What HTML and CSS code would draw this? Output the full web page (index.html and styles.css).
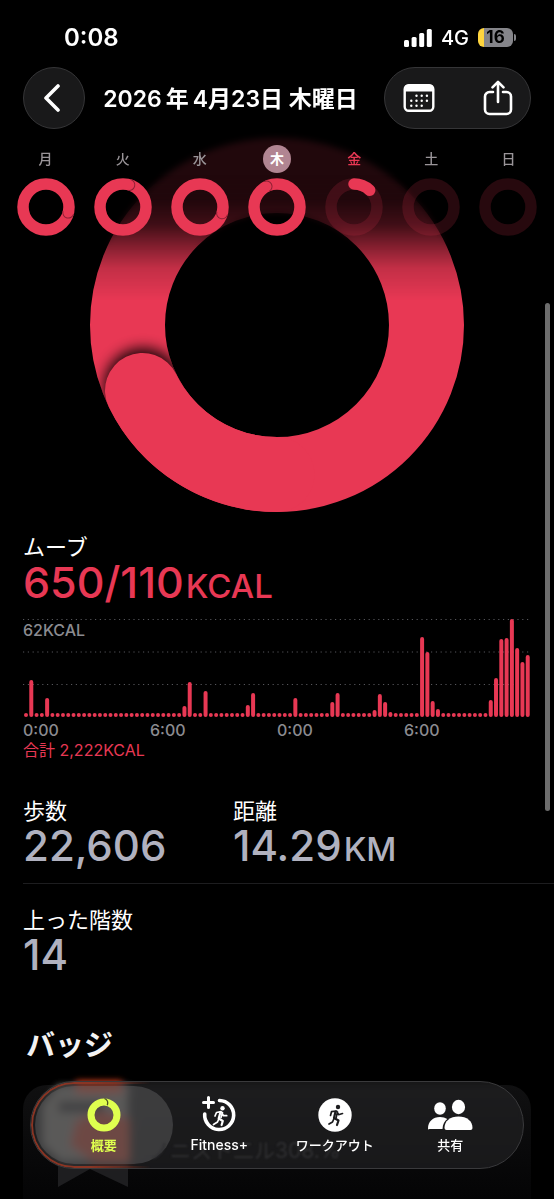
FILE: index.html
```html
<!DOCTYPE html>
<html lang="ja">
<head>
    <meta charset="UTF-8">
    <meta name="viewport" content="width=device-width, initial-scale=1.0">
    <title>アクティビティ</title>
    <link rel="stylesheet" href="styles.css">
</head>
<body>
    <header class="top">
        <div class="status">
            <span class="clock">0:08</span>
            <div class="status-right">
                <svg class="signal" viewBox="0 0 28 18" fill="#fff">
                    <rect x="0" y="11" width="5" height="7" rx="1.5"/>
                    <rect x="7.6" y="8" width="5" height="10" rx="1.5"/>
                    <rect x="15.2" y="4" width="5" height="14" rx="1.5"/>
                    <rect x="22.8" y="0" width="5" height="18" rx="1.5"/>
                </svg>
                <span class="network">4G</span>
                <span class="battery">16</span>
            </div>
        </div>

        <div class="nav">
            <button class="back" aria-label="戻る">
                <svg width="18" height="28" viewBox="0 0 18 28" fill="none" stroke="#fff" stroke-width="3.6" stroke-linecap="round" stroke-linejoin="round"><path d="M15 2 3 14 15 26"/></svg>
            </button>
            <h1>2026<span class="unit">年</span>4月23日 木曜日</h1>
            <div class="actions">
                <button aria-label="カレンダー">
                    <svg width="32" height="30" viewBox="0 0 32 30">
                        <rect x="1.7" y="2.2" width="28.6" height="25.6" rx="4" fill="none" stroke="#fff" stroke-width="2.4"/>
                        <path d="M1.5 8.5V5.5a4 4 0 0 1 4-4h21a4 4 0 0 1 4 4v3z" fill="#fff"/>
                        <g fill="#fff">
                            <circle cx="13.5" cy="12.8" r="1.2"/><circle cx="18.7" cy="12.8" r="1.2"/><circle cx="23.9" cy="12.8" r="1.2"/>
                            <circle cx="8.3" cy="17.8" r="1.2"/><circle cx="13.5" cy="17.8" r="1.2"/><circle cx="18.7" cy="17.8" r="1.2"/><circle cx="23.9" cy="17.8" r="1.2"/>
                            <circle cx="8.3" cy="22.8" r="1.2"/><circle cx="13.5" cy="22.8" r="1.2"/><circle cx="18.7" cy="22.8" r="1.2"/>
                        </g>
                    </svg>
                </button>
                <button aria-label="共有する">
                    <svg width="30" height="36" viewBox="0 0 30 36" fill="none" stroke="#fff" stroke-width="2.6" stroke-linecap="round" stroke-linejoin="round">
                        <path d="M10 12H6.500a4.500 4.500 0 0 0-4.500 4.500v13a4.500 4.500 0 0 0 4.500 4.500h17a4.500 4.500 0 0 0 4.500-4.500v-13a4.500 4.500 0 0 0-4.500-4.500H20"/>
                        <path d="M15 22V2M9.500 7.300 15 1.800l5.500 5.500"/>
                    </svg>
                </button>
            </div>
        </div>

        <div class="week">
            <div class="day">
                <span>月</span>
                <svg viewBox="0 0 58 58"><circle class="full" cx="29" cy="29" r="23"/><path class="tip" d="M29 .5a5.500 5.500 0 0 1 0 11" transform="rotate(104 29 29)"/></svg>
            </div>
            <div class="day">
                <span>火</span>
                <svg viewBox="0 0 58 58"><circle class="full" cx="29" cy="29" r="23"/><path class="tip" d="M29 .5a5.500 5.500 0 0 1 0 11" transform="rotate(16 29 29)"/></svg>
            </div>
            <div class="day">
                <span>水</span>
                <svg viewBox="0 0 58 58"><circle class="full" cx="29" cy="29" r="23"/><path class="tip" d="M29 .5a5.500 5.500 0 0 1 0 11" transform="rotate(106 29 29)"/></svg>
            </div>
            <div class="day selected">
                <span>木</span>
                <svg viewBox="0 0 58 58"><circle class="full" cx="29" cy="29" r="23"/><path class="tip" d="M29 .5a5.500 5.500 0 0 1 0 11" transform="rotate(-27 29 29)"/></svg>
            </div>
            <div class="day today">
                <span>金</span>
                <svg viewBox="0 0 58 58"><circle class="track" cx="29" cy="29" r="23"/><path class="full" stroke-linecap="round" d="M29 6a23 23 0 0 1 15.700 6.200"/></svg>
            </div>
            <div class="day">
                <span>土</span>
                <svg viewBox="0 0 58 58"><circle class="track" cx="29" cy="29" r="23"/></svg>
            </div>
            <div class="day">
                <span>日</span>
                <svg viewBox="0 0 58 58"><circle class="track" cx="29" cy="29" r="23"/></svg>
            </div>
        </div>
    </header>

    <main>
        <svg class="ring" viewBox="0 0 374 374">
            <defs>
                <filter id="soft" x="-50%" y="-50%" width="200%" height="200%"><feGaussianBlur stdDeviation="7"/></filter>
                <clipPath id="band"><path clip-rule="evenodd" d="M187 0a187 187 0 1 1 0 374 187 187 0 0 1 0-374zM187 75a112 112 0 1 0 0 224 112 112 0 0 0 0-224z"/></clipPath>
            </defs>
            <circle cx="187" cy="187" r="149.500" fill="none" stroke="#e83854" stroke-width="75"/>
            <g clip-path="url(#band)"><circle cx="53" cy="249" r="39" fill="#000" opacity=".9" filter="url(#soft)"/></g>
            <path d="M187 336.500A149.500 149.500 0 0 1 52.500 252.500" fill="none" stroke="#e83854" stroke-width="75" stroke-linecap="round"/>
        </svg>

        <section class="move">
            <h2 class="label">ムーブ</h2>
            <p class="value pink">650/110<small>KCAL</small></p>
            <div class="chart">
                <span class="chart-max">62KCAL</span>
                <svg id="bars" viewBox="0 0 508 98">
                    <g class="grid">
                        <path d="M0 .5H508"/>
                        <path d="M0 33H508"/>
                        <path d="M0 65.500H508"/>
                    </g>
                </svg>
            </div>
            <div class="hours"><span>0:00</span><span>6:00</span><span>0:00</span><span>6:00</span></div>
            <p class="total">合計 2,222KCAL</p>
        </section>

        <section class="stats">
            <div class="stat">
                <h2 class="label">歩数</h2>
                <p class="value">22,606</p>
            </div>
            <div class="stat">
                <h2 class="label">距離</h2>
                <p class="value">14.29<small>KM</small></p>
            </div>
        </section>
        <section class="stats">
            <div class="stat">
                <h2 class="label">上った階数</h2>
                <p class="value">14</p>
            </div>
        </section>

        <h2 class="badge-title">バッジ</h2>
        <div class="badge-card">
            <svg width="90" height="108" viewBox="0 0 90 108">
                <defs>
                    <filter id="haze" x="-20%" y="-20%" width="140%" height="140%"><feGaussianBlur stdDeviation="3"/></filter>
                </defs>
                <path d="M8 60v42l32-18 38 18V50z" fill="#1e1e20"/>
                <g filter="url(#haze)">
                    <path d="M-8 20 8 0h72l-2 10v66H10L-8 60z" fill="#8a877f"/>
                    <path d="M26-4h46v12H26z" fill="#ff4a24"/>
                    <path d="M26 36l26-10 28 8v44H44L20 60z" fill="#d8422a"/>
                    <path d="M8 16h46v12H8z" fill="#1c1c20"/>
                </g>
            </svg>
        </div>
    </main>

    <div class="scrollbar"></div>

    <nav class="tabs">
        <a class="tab active" href="#">
            <svg viewBox="0 0 34 34"><circle cx="17" cy="17" r="13" fill="none" stroke="#dfff4f" stroke-width="7"/><path d="M17.500.500q4.500 2 2.800 6.800" fill="none" stroke="#4c5322" stroke-width="1.300"/></svg>
            概要
        </a>
        <a class="tab" href="#">
            <svg viewBox="0 0 34 34" fill="none" stroke="#fff" stroke-linecap="round" stroke-linejoin="round">
                <path d="M17.500 2.500A14.500 14.500 0 1 1 2.700 16" stroke-width="3.600"/>
                <path d="M6.500-.500v10M1.500 4.500h10" stroke-width="3"/>
                <circle cx="20.500" cy="10.300" r="2.200" fill="#fff" stroke="none"/>
                <path d="M18.500 14 16.700 20.500l4.100 2.500-1.200 4" stroke-width="2.200"/>
                <path d="M17 20.500 15.500 24 11.500 26.500M13 18l1.500-3.500 4.500-.800 2.500 4h3.200M20.500 14.500l-1.500 5" stroke-width="1.700"/>
            </svg>
            <span class="latin">Fitness+</span>
        </a>
        <a class="tab" href="#">
            <svg viewBox="0 0 34 34" fill="none" stroke="#1c1c1e" stroke-linecap="round" stroke-linejoin="round">
                <circle cx="17" cy="17" r="16.700" fill="#fff" stroke="none"/>
                <circle cx="20" cy="9" r="2.200" fill="#1c1c1e" stroke="none"/>
                <path d="M17.500 13.500 16 20l4.500 2.500-1.500 4.500" stroke-width="2.200"/>
                <path d="M16 20.500 14.500 24 11 26M12.500 17.500l1-3.800 5-.700 2 3.700 4-1.200M19.500 14l-1.500 6" stroke-width="1.700"/>
            </svg>
            ワークアウト
        </a>
        <a class="tab" href="#">
            <svg class="wide" viewBox="0 0 46 34" fill="#fff">
                <ellipse cx="13" cy="10.500" rx="5.800" ry="6.200"/>
                <path d="M1 30.500C1 23.500 6 19 13 19c2.800 0 5.300.700 7.300 2-2.800 2-4.500 5-4.800 10H2.500Q1 32 1 30.500z"/>
                <ellipse cx="31.500" cy="9" rx="6.600" ry="7.200"/>
                <path d="M17.500 30C17.500 23 23 18.500 31.500 18.500S45.500 23 45.500 30q0 2-2 2h-24q-2 0-2-2z"/>
            </svg>
            共有
        </a>
        <span class="glass-text" aria-hidden="true">ノニスト二ル308.%</span>
    </nav>

    <script>
        // 30分ごとの消費カロリー(棒の高さ)。書いていない所は最小値
        const bars = {
            1: 37, 4: 19, 30: 11, 31: 35, 34: 26, 42: 12, 43: 24, 51: 19,
            58: 15, 59: 24, 66: 7, 67: 23, 68: 15, 69: 5, 75: 80, 76: 65, 77: 16, 78: 8,
            88: 17, 89: 39, 90: 78, 91: 79, 92: 98, 93: 69, 94: 55, 95: 62
        };
        const svg = document.getElementById('bars');
        const step = 507 / 96;

        for (let i = 0; i < 96; i++) {
            const h = bars[i] || 4;
            const rect = document.createElementNS('http://www.w3.org/2000/svg', 'rect');
            rect.setAttribute('class', 'bar');
            rect.setAttribute('x', i * step + 1);
            rect.setAttribute('y', 98 - h);
            rect.setAttribute('width', 4);
            rect.setAttribute('height', h);
            rect.setAttribute('rx', 2);
            svg.appendChild(rect);
        }
    </script>
</body>
</html>
```

FILE: styles.css
```css
* {
    margin: 0;
    padding: 0;
    box-sizing: border-box;
}

body {
    font-family: Inter, "Noto Sans CJK JP", sans-serif;
    background: #000;
    color: #fff;
}

svg {
    display: block;
}

button {
    background: none;
    border: none;
    color: inherit;
    cursor: pointer;
}

/* Header over the scrolled content */
.top {
    position: fixed;
    top: 0;
    left: 0;
    right: 0;
    z-index: 2;
    height: 300px;
    background: linear-gradient(rgba(0, 0, 0, 0.86) 200px, rgba(0, 0, 0, 0.72) 225px, rgba(0, 0, 0, 0.45) 245px, rgba(0, 0, 0, 0.16) 268px, transparent 300px);
}

.top::before {
    content: "";
    position: absolute;
    inset: 0 0 50px;
    z-index: -1;
    backdrop-filter: blur(3px);
    mask-image: linear-gradient(#000 70%, transparent);
}

.status {
    display: flex;
    justify-content: space-between;
    align-items: center;
    height: 67px;
    padding: 8px 38px 0 64px;
}

.clock {
    font-size: 24px;
    font-weight: 600;
}

.status-right {
    display: flex;
    align-items: center;
    gap: 9px;
}

.signal {
    width: 28px;
    height: 18px;
}

.network {
    font-size: 20px;
    font-weight: 500;
}

.battery {
    position: relative;
    width: 35px;
    height: 19px;
    margin-right: 3px;
    border-radius: 6px;
    background: linear-gradient(to right, #ffd53e 6px, #85858a 6px);
    color: #000;
    font-size: 17px;
    font-weight: 700;
    line-height: 19px;
    text-align: center;
}

.battery::after {
    content: "";
    position: absolute;
    left: 36px;
    top: 6px;
    width: 2px;
    height: 7px;
    border-radius: 0 2px 2px 0;
    background: #85858a;
}

.nav {
    display: flex;
    justify-content: space-between;
    align-items: center;
    height: 62px;
    padding: 0 23px;
}

.nav h1 {
    padding: 0 8px 3px 0;
    font-size: 23px;
    font-weight: 600;
    white-space: nowrap;
}

.nav h1 .unit {
    margin: 0 4px;
}

.back,
.actions {
    display: flex;
    align-items: center;
    height: 62px;
    border: 1px solid #353537;
    border-radius: 31px;
    background: #19191a;
}

.back {
    justify-content: center;
    width: 62px;
    padding-right: 4px;
}

.actions {
    justify-content: space-between;
    width: 147px;
    padding: 0 17px 0 18px;
}

.week {
    display: flex;
    padding: 16px 7px 0;
}

.day {
    flex: 1;
    display: flex;
    flex-direction: column;
    align-items: center;
    gap: 5px;
}

.day span {
    width: 28px;
    height: 28px;
    border-radius: 50%;
    color: #9a9599;
    font-size: 14px;
    font-weight: 500;
    line-height: 28px;
    text-align: center;
}

.day.selected span {
    background: #b18592;
    color: #fff;
    font-weight: 700;
}

.day.today span {
    color: #e83854;
}

.day svg {
    width: 58px;
    height: 58px;
    fill: none;
}

.full {
    stroke: #e83854;
    stroke-width: 11.5;
}

.track {
    stroke: rgba(232, 56, 84, 0.17);
    stroke-width: 11.5;
}

.tip {
    stroke: #8e2034;
    stroke-width: 1;
}

/* Content */
main {
    display: flex;
    flex-direction: column;
    min-height: 100vh;
    padding: 138px 23px 0;
}

.ring {
    width: 374px;
    height: 374px;
    margin: 0 auto 20px;
}

.label {
    font-size: 22px;
    font-weight: 400;
    line-height: 30px;
}

.value {
    color: #b0b1bf;
    font-size: 42px;
    font-weight: 500;
    line-height: 40px;
}

.value small {
    margin-left: 2px;
    font-size: 33px;
    line-height: 1px;
}

.pink {
    color: #e83854;
}

.value.pink {
    font-size: 43px;
}

.chart {
    position: relative;
    margin-top: 17px;
}

.chart-max {
    position: absolute;
    top: 1px;
    left: 0;
    color: #8b8b90;
    font-size: 16px;
    font-weight: 500;
    line-height: 20px;
}

.grid {
    stroke: #55555a;
    stroke-width: 1;
    stroke-dasharray: 1.2 3.6;
}

.bar {
    fill: #e83854;
}

.hours {
    display: grid;
    grid-template-columns: repeat(4, 1fr);
    margin-top: 3px;
    color: #8b8b90;
    font-size: 16px;
    font-weight: 500;
    line-height: 20px;
}

.total {
    color: #e83854;
    font-size: 16px;
    line-height: 20px;
}

.stats {
    display: grid;
    grid-template-columns: 210px 1fr;
    padding-top: 21px;
}

.move + .stats {
    margin: 15px -23px 0 0;
    padding-bottom: 17px;
    border-bottom: 1px solid #1d1d1f;
}

.badge-title {
    margin-top: 51px;
    padding-left: 3px;
    color: #f2f2f2;
    font-size: 29px;
    font-weight: 700;
    line-height: 40px;
}

.badge-card {
    flex: 1;
    margin-top: 19px;
    padding-left: 27px;
    border-radius: 24px 24px 0 0;
    background: linear-gradient(#101011, #040405);
}

.badge-card svg {
    overflow: visible;
}

.scrollbar {
    position: fixed;
    top: 303px;
    right: 4px;
    width: 5px;
    height: 508px;
    border-radius: 3px;
    background: #6d6d6d;
}

/* Tab bar */
.tabs {
    position: fixed;
    left: 30px;
    right: 30px;
    bottom: 30px;
    display: flex;
    height: 88px;
    padding: 0 15px;
    border: 1px solid #3a3a3c;
    border-radius: 44px;
    background: rgba(36, 36, 38, 0.6);
    backdrop-filter: blur(3px);
}

.tabs::after {
    content: "";
    position: absolute;
    inset: 0;
    border: 2px solid #8a3524;
    border-radius: 44px;
    mask-image: linear-gradient(to right, #000 60px, transparent 120px);
    pointer-events: none;
}

/* Refraction of the card text in the glass */
.glass-text {
    position: absolute;
    left: 118px;
    bottom: 2px;
    z-index: -1;
    color: #303032;
    filter: blur(1px);
    font-size: 21px;
    line-height: 30px;
}

.tab {
    position: relative;
    flex: 1;
    display: flex;
    flex-direction: column;
    align-items: center;
    padding-top: 16px;
    color: #fff;
    font-size: 13px;
    font-weight: 500;
    line-height: 20px;
    text-decoration: none;
    white-space: nowrap;
}

.tab .latin {
    font-size: 14px;
}

.tab svg {
    position: relative;
    width: 34px;
    height: 34px;
    margin-bottom: 3px;
    overflow: visible;
}

.tab .wide {
    width: 46px;
}

.tab.active {
    color: #dfff4f;
    font-weight: 700;
}

.active::before {
    content: "";
    position: absolute;
    inset: 4px -11px;
    z-index: -1;
    border-radius: 39px;
    background: rgba(110, 110, 112, 0.4);
}
```
